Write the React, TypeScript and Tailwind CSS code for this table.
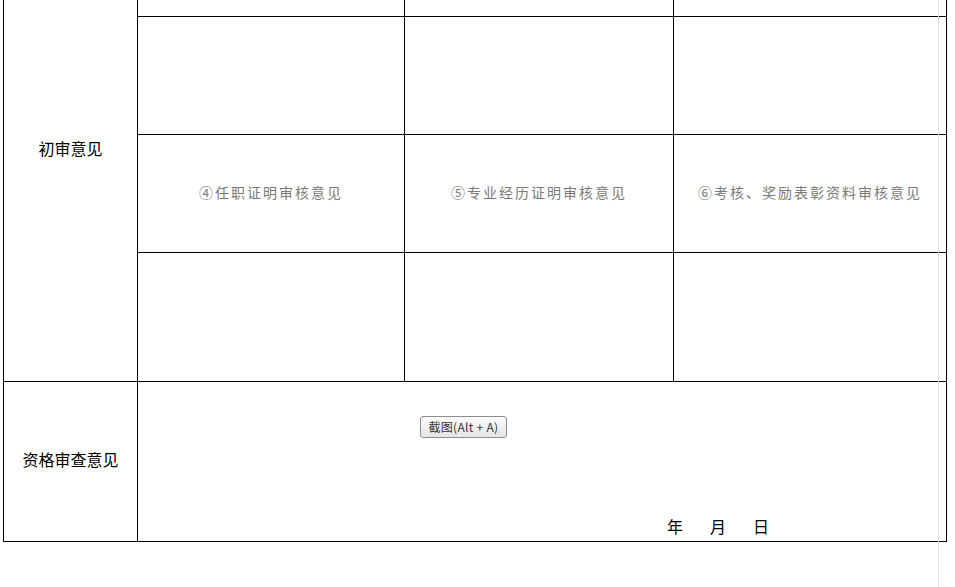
export default function App() {
    const cjk = "font-['Noto_Sans_CJK_SC','Noto_Sans',sans-serif]";
    const hint = `${cjk} pb-[3px] text-[14px] tracking-[2px] text-[#7a7a7a]`;

    return (
        <div className="relative h-[587px] w-[955px] overflow-hidden bg-white">
            {/* Table (scrolled: top part above the window) */}
            <div className="ml-[3px] mt-[-82px] grid w-[944px] grid-cols-[133px_266px_268px_272px] grid-rows-[97px_117px_117px_128px_159px] gap-px bg-black p-px">
                {/* 初审意见 */}
                <div className={`row-span-4 flex items-center justify-center bg-white pb-[4px] text-[16px] text-black ${cjk}`}>
                    初审意见
                </div>
                <div className="bg-white" />
                <div className="bg-white" />
                <div className="bg-white" />

                <div className="bg-white" />
                <div className="bg-white" />
                <div className="bg-white" />

                <div className={`flex items-center justify-center bg-white ${hint}`}>④任职证明审核意见</div>
                <div className={`flex items-center justify-center bg-white ${hint}`}>⑤专业经历证明审核意见</div>
                <div className={`flex items-center justify-center bg-white ${hint}`}>⑥考核、奖励表彰资料审核意见</div>

                <div className="bg-white" />
                <div className="bg-white" />
                <div className="bg-white" />

                {/* 资格审查意见 */}
                <div className={`flex items-center justify-center bg-white pb-[5px] text-[16px] text-black ${cjk}`}>
                    资格审查意见
                </div>
                <div className="relative col-span-3 flex flex-col justify-end bg-white pb-[5px]">
                    <div
                        className={`absolute left-[282px] top-[34px] flex h-[22px] w-[87px] items-center justify-center rounded-[3px] border border-[#8d8d8d] bg-gradient-to-b from-[#fbfbfb] to-[#e6e6ea] text-[12px] tracking-[0.3px] text-[#333] ${cjk}`}
                    >
                        截图(Alt&nbsp;+&nbsp;A)
                    </div>
                    <div className={`flex gap-[27px] pl-[529px] text-[16px] leading-[20px] text-black ${cjk}`}>
                        <span>年</span>
                        <span>月</span>
                        <span>日</span>
                    </div>
                </div>
            </div>

            {/* faint scrollbar edge */}
            <div className="absolute left-[938px] top-0 h-full w-px bg-[#e2e2e2]" />
        </div>
    );
}
